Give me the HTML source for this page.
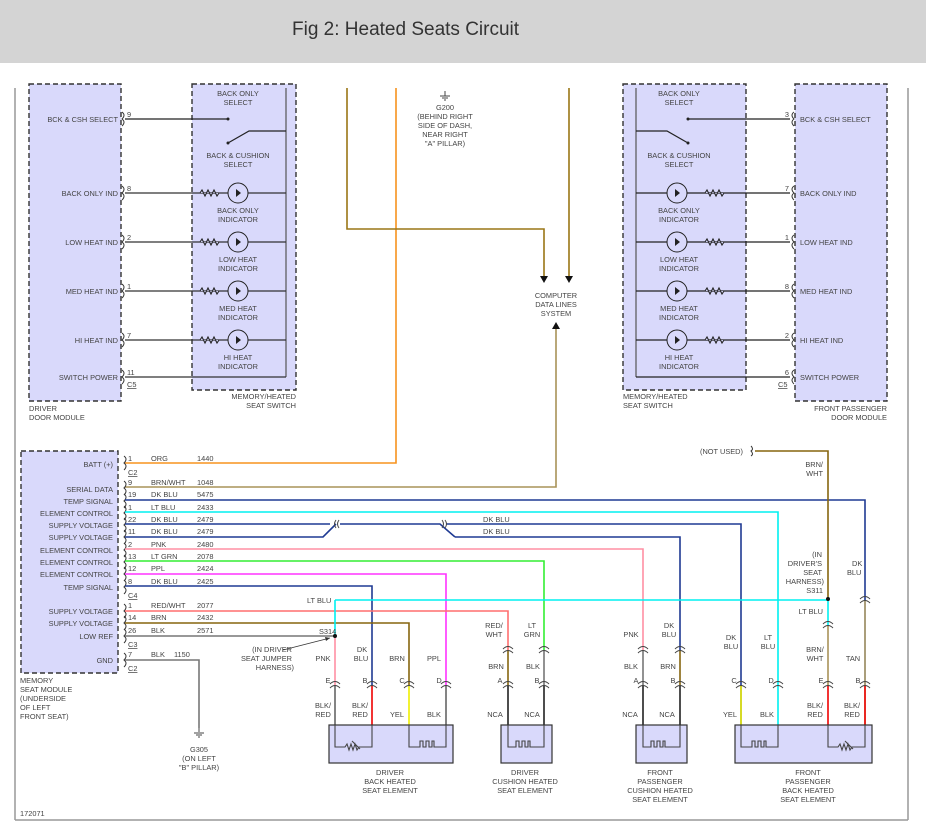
<!DOCTYPE html>
<html><head><meta charset="utf-8"><style>
html,body{margin:0;padding:0;background:#fff;width:926px;height:835px;overflow:hidden}
svg{display:block}
text{font-family:"Liberation Sans",sans-serif;font-size:7.4px;fill:#444}
.m{text-anchor:middle}.e{text-anchor:end}
.w{fill:none;stroke-width:1.6}
.bx{fill:#d9d9fb;stroke:#333;stroke-width:1.4;stroke-dasharray:5,3}
.el{fill:#d9d9fb;stroke:#333;stroke-width:1.2}
.k{stroke:#222;stroke-width:1.2;fill:none}
</style></head><body>
<svg width="926" height="835" viewBox="0 0 926 835" xmlns="http://www.w3.org/2000/svg">
<rect x="0" y="0" width="926" height="63" fill="#d4d4d4"/>
<text x="292" y="35" style="font-size:19px;fill:#333">Fig 2: Heated Seats Circuit</text>
<line x1="15" y1="88" x2="15" y2="820" stroke="#999" stroke-width="1.5"/>
<line x1="908" y1="88" x2="908" y2="820" stroke="#999" stroke-width="1.5"/>
<line x1="15" y1="820" x2="908" y2="820" stroke="#999" stroke-width="1.5"/>

<!-- boxes -->
<rect class="bx" x="29" y="84" width="92" height="317"/>
<rect class="bx" x="192" y="84" width="104" height="306"/>
<rect class="bx" x="623" y="84" width="123" height="306"/>
<rect class="bx" x="795" y="84" width="92" height="317"/>
<line x1="286" y1="88" x2="286" y2="377" stroke="#555" stroke-width="1.2"/>
<line x1="636" y1="88" x2="636" y2="377" stroke="#555" stroke-width="1.2"/>
<g class="e">
<text x="118" y="122">BCK &amp; CSH SELECT</text><text x="118" y="196">BACK ONLY IND</text><text x="118" y="245">LOW HEAT IND</text><text x="118" y="294">MED HEAT IND</text><text x="118" y="343">HI HEAT IND</text><text x="118" y="380">SWITCH POWER</text>
</g>
<text x="127" y="117">9</text><text x="127" y="191">8</text><text x="127" y="240">2</text><text x="127" y="289">1</text><text x="127" y="338">7</text><text x="127" y="375">11</text><text x="127" y="387" text-decoration="underline">C5</text>
<g class="k">
<path d="M125 119H228"/><path d="M228 143L249 131H286"/>
<path d="M125 193H286M125 242H286M125 291H286M125 340H286M125 377H286" stroke="#333"/>
<path d="M688 119H790"/><path d="M636 131H667L688 143"/><path d="M636 193H790M636 242H790M636 291H790M636 340H790M636 377H790"/>
</g>
<circle cx="228" cy="119" r="1.5" fill="#222"/><circle cx="228" cy="143" r="1.5" fill="#222"/><circle cx="688" cy="119" r="1.5" fill="#222"/><circle cx="688" cy="143" r="1.5" fill="#222"/>
<g stroke="#222" stroke-width="1" fill="#d9d9fb">
<circle cx="238" cy="193" r="10"/><circle cx="238" cy="242" r="10"/><circle cx="238" cy="291" r="10"/><circle cx="238" cy="340" r="10"/>
<circle cx="677" cy="193" r="10"/><circle cx="677" cy="242" r="10"/><circle cx="677" cy="291" r="10"/><circle cx="677" cy="340" r="10"/>
</g>
<g fill="#222">
<path d="M236 189v8l5-4z"/><path d="M236 238v8l5-4z"/><path d="M236 287v8l5-4z"/><path d="M236 336v8l5-4z"/>
<path d="M675 189v8l5-4z"/><path d="M675 238v8l5-4z"/><path d="M675 287v8l5-4z"/><path d="M675 336v8l5-4z"/>
</g>
<g fill="#d9d9fb" stroke="#222" stroke-width="1.1">
<path d="M200 193l2-3 3 6 3-6 3 6 3-6 3 6 2-3"/><path d="M200 242l2-3 3 6 3-6 3 6 3-6 3 6 2-3"/><path d="M200 291l2-3 3 6 3-6 3 6 3-6 3 6 2-3"/><path d="M200 340l2-3 3 6 3-6 3 6 3-6 3 6 2-3"/>
<path d="M705 193l2-3 3 6 3-6 3 6 3-6 3 6 2-3"/><path d="M705 242l2-3 3 6 3-6 3 6 3-6 3 6 2-3"/><path d="M705 291l2-3 3 6 3-6 3 6 3-6 3 6 2-3"/><path d="M705 340l2-3 3 6 3-6 3 6 3-6 3 6 2-3"/>
</g>
<g class="m">
<text x="238" y="96">BACK ONLY</text><text x="238" y="105">SELECT</text>
<text x="238" y="158">BACK &amp; CUSHION</text><text x="238" y="167">SELECT</text>
<text x="238" y="213">BACK ONLY</text><text x="238" y="222">INDICATOR</text>
<text x="238" y="262">LOW HEAT</text><text x="238" y="271">INDICATOR</text>
<text x="238" y="311">MED HEAT</text><text x="238" y="320">INDICATOR</text>
<text x="238" y="360">HI HEAT</text><text x="238" y="369">INDICATOR</text>
<text x="679" y="96">BACK ONLY</text><text x="679" y="105">SELECT</text>
<text x="679" y="158">BACK &amp; CUSHION</text><text x="679" y="167">SELECT</text>
<text x="679" y="213">BACK ONLY</text><text x="679" y="222">INDICATOR</text>
<text x="679" y="262">LOW HEAT</text><text x="679" y="271">INDICATOR</text>
<text x="679" y="311">MED HEAT</text><text x="679" y="320">INDICATOR</text>
<text x="679" y="360">HI HEAT</text><text x="679" y="369">INDICATOR</text>
</g>
<text x="296" y="399" class="e">MEMORY/HEATED</text><text x="296" y="408" class="e">SEAT SWITCH</text>
<text x="29" y="411">DRIVER</text><text x="29" y="420">DOOR MODULE</text>

<text x="800" y="122">BCK &amp; CSH SELECT</text><text x="800" y="196">BACK ONLY IND</text><text x="800" y="245">LOW HEAT IND</text><text x="800" y="294">MED HEAT IND</text><text x="800" y="343">HI HEAT IND</text><text x="800" y="380">SWITCH POWER</text>
<g class="e"><text x="789" y="117">3</text><text x="789" y="191">7</text><text x="789" y="240">1</text><text x="789" y="289">8</text><text x="789" y="338">2</text><text x="789" y="375">6</text></g>
<text x="778" y="387" text-decoration="underline">C5</text>
<text x="623" y="399">MEMORY/HEATED</text><text x="623" y="408">SEAT SWITCH</text>
<text x="887" y="411" class="e">FRONT PASSENGER</text><text x="887" y="420" class="e">DOOR MODULE</text>
<g fill="none" stroke="#333" stroke-width="1">
<path d="M122 112q4 3 0 7q4 3 0 7M122 186q4 3 0 7q4 3 0 7M122 235q4 3 0 7q4 3 0 7M122 284q4 3 0 7q4 3 0 7M122 333q4 3 0 7q4 3 0 7M122 370q4 3 0 7q4 3 0 7"/>
<path d="M794 112q-4 3 0 7q-4 3 0 7M794 186q-4 3 0 7q-4 3 0 7M794 235q-4 3 0 7q-4 3 0 7M794 284q-4 3 0 7q-4 3 0 7M794 333q-4 3 0 7q-4 3 0 7M794 370q-4 3 0 7q-4 3 0 7"/>
</g>

<!-- G200 -->
<path d="M445 91v5M440 96h10M442 98h6M444 100h2" stroke="#444" stroke-width="1"/>
<g class="m"><text x="445" y="110">G200</text><text x="445" y="119">(BEHIND RIGHT</text><text x="445" y="128">SIDE OF DASH,</text><text x="445" y="137">NEAR RIGHT</text><text x="445" y="146">"A" PILLAR)</text>
<text x="556" y="298">COMPUTER</text><text x="556" y="307">DATA LINES</text><text x="556" y="316">SYSTEM</text></g>
<g class="w">
<path d="M396 88V463H125" stroke="#f7931e"/>
<path d="M347 88V229H544V276" stroke="#9a7616"/>
<path d="M569 88V276" stroke="#9a7616"/>
<path d="M125 487H556V327" stroke="#a89358"/>
</g>
<path d="M540 276h8l-4 7z M565 276h8l-4 7z M552 329h8l-4-7z" fill="#111"/>

<!-- memory seat module -->
<rect class="bx" x="21" y="451" width="97" height="222"/>
<g class="e">
<text x="113" y="467">BATT (+)</text><text x="113" y="492">SERIAL DATA</text><text x="113" y="504">TEMP SIGNAL</text><text x="113" y="516">ELEMENT CONTROL</text><text x="113" y="528">SUPPLY VOLTAGE</text><text x="113" y="540">SUPPLY VOLTAGE</text><text x="113" y="553">ELEMENT CONTROL</text><text x="113" y="565">ELEMENT CONTROL</text><text x="113" y="577">ELEMENT CONTROL</text><text x="113" y="590">TEMP SIGNAL</text><text x="113" y="614">SUPPLY VOLTAGE</text><text x="113" y="626">SUPPLY VOLTAGE</text><text x="113" y="639">LOW REF</text><text x="113" y="663">GND</text>
</g>
<g fill="none" stroke="#333" stroke-width="1">
<path d="M124 456q4 3 0 7q4 3 0 7M124 481q4 3 0 7q4 3 0 7M124 494q4 3 0 7q4 3 0 7M124 506q4 3 0 7q4 3 0 7M124 518q4 3 0 7q4 3 0 7M124 530q4 3 0 7q4 3 0 7M124 543q4 3 0 7q4 3 0 7M124 555q4 3 0 7q4 3 0 7M124 567q4 3 0 7q4 3 0 7M124 580q4 3 0 7q4 3 0 7M124 604q4 3 0 7q4 3 0 7M124 616q4 3 0 7q4 3 0 7M124 629q4 3 0 7q4 3 0 7M124 653q4 3 0 7q4 3 0 7"/>
</g>
<text x="128" y="461">1</text><text x="151" y="461">ORG</text><text x="197" y="461">1440</text>
<text x="128" y="475" text-decoration="underline">C2</text>
<text x="128" y="485">9</text><text x="151" y="485">BRN/WHT</text><text x="197" y="485">1048</text>
<text x="128" y="497">19</text><text x="151" y="497">DK BLU</text><text x="197" y="497">5475</text>
<text x="128" y="510">1</text><text x="151" y="510">LT BLU</text><text x="197" y="510">2433</text>
<text x="128" y="522">22</text><text x="151" y="522">DK BLU</text><text x="197" y="522">2479</text>
<text x="128" y="534">11</text><text x="151" y="534">DK BLU</text><text x="197" y="534">2479</text>
<text x="128" y="547">2</text><text x="151" y="547">PNK</text><text x="197" y="547">2480</text>
<text x="128" y="559">13</text><text x="151" y="559">LT GRN</text><text x="197" y="559">2078</text>
<text x="128" y="571">12</text><text x="151" y="571">PPL</text><text x="197" y="571">2424</text>
<text x="128" y="584">8</text><text x="151" y="584">DK BLU</text><text x="197" y="584">2425</text>
<text x="128" y="598" text-decoration="underline">C4</text>
<text x="128" y="608">1</text><text x="151" y="608">RED/WHT</text><text x="197" y="608">2077</text>
<text x="128" y="620">14</text><text x="151" y="620">BRN</text><text x="197" y="620">2432</text>
<text x="128" y="633">26</text><text x="151" y="633">BLK</text><text x="197" y="633">2571</text>
<text x="128" y="647" text-decoration="underline">C3</text>
<text x="128" y="657">7</text><text x="151" y="657">BLK</text><text x="174" y="657">1150</text>
<text x="128" y="671" text-decoration="underline">C2</text>
<text x="20" y="683">MEMORY</text><text x="20" y="692">SEAT MODULE</text><text x="20" y="701">(UNDERSIDE</text><text x="20" y="710">OF LEFT</text><text x="20" y="719">FRONT SEAT)</text>
<text x="20" y="816">172071</text>

<!-- wires -->
<g class="w">
<path d="M125 500H865V685" stroke="#1f3a93"/>
<path d="M865 600V725" stroke="#b8a46a"/>
<path d="M125 512H778V725" stroke="#00f0f0"/>
<path d="M125 524H330M340 524H440L455 537" stroke="#1f3a93"/>
<path d="M125 537H323L336 524" stroke="#1f3a93"/>
<path d="M446 524H741V725" stroke="#1f3a93"/>
<path d="M455 537H680V650" stroke="#1f3a93"/>
<path d="M125 549H643V650" stroke="#ff8fa3"/>
<path d="M125 561H544V650" stroke="#33ee33"/>
<path d="M125 574H446V685" stroke="#ff33ff"/>
<path d="M125 586H372V685" stroke="#1f3a93"/>
<path d="M125 611H508V650" stroke="#ff6f6f"/>
<path d="M125 623H409V685" stroke="#86650f"/>
<path d="M125 636H335" stroke="#777"/>
<path d="M335 600H828M335 600V636" stroke="#00f0f0"/>
<path d="M335 636V685" stroke="#ff8fa3"/>
<path d="M125 660H199V728" stroke="#777"/>
<path d="M755 451H828V599" stroke="#86650f"/>
<path d="M828 599V625" stroke="#00f0f0"/>
<path d="M828 625V685" stroke="#a89358"/>
<path d="M508 650V685" stroke="#86650f"/><path d="M544 650V685" stroke="#777"/>
<path d="M643 650V685" stroke="#777"/><path d="M680 650V685" stroke="#86650f"/>
<path d="M335 685V750" stroke="#666"/><path d="M372 685V725" stroke="#e00"/><path d="M409 685V725" stroke="#ee0"/><path d="M446 685V750" stroke="#666"/>
<path d="M508 685V750M544 685V750M643 685V750M680 685V750" stroke="#222"/>
<path d="M741 685V725" stroke="#ee0"/><path d="M778 725V750" stroke="#666"/><path d="M828 685V725" stroke="#e00"/><path d="M865 685V725" stroke="#e00"/>
</g>
<circle cx="335" cy="636" r="2" fill="#111"/><circle cx="828" cy="599" r="2" fill="#111"/>
<path d="M283 650L330 638" stroke="#333" stroke-width="0.8"/><path d="M330 638l-5-1 1 4z" fill="#333"/>
<text x="319" y="634">S314</text>
<text x="307" y="603">LT BLU</text><text x="483" y="522">DK BLU</text><text x="483" y="534">DK BLU</text>
<text x="700" y="454">(NOT USED)</text>
<path d="M751 446q3 3 0 5q3 3 0 5" fill="none" stroke="#333"/>
<g class="e"><text x="292" y="652">(IN DRIVER</text><text x="292" y="661">SEAT JUMPER</text><text x="294" y="670">HARNESS)</text>
<text x="823" y="467">BRN/</text><text x="823" y="476">WHT</text>
<text x="822" y="557">(IN</text><text x="822" y="566">DRIVER'S</text><text x="822" y="575">SEAT</text><text x="824" y="584">HARNESS)</text><text x="823" y="593">S311</text>
<text x="823" y="614">LT BLU</text></g>
<text x="852" y="566">DK</text><text x="847" y="575">BLU</text>
<g class="m">
<text x="323" y="661">PNK</text><text x="362" y="652">DK</text><text x="361" y="661">BLU</text><text x="397" y="661">BRN</text><text x="434" y="661">PPL</text>
<text x="328" y="683">E</text><text x="365" y="683">B</text><text x="402" y="683">C</text><text x="439" y="683">D</text>
<text x="323" y="708">BLK/</text><text x="323" y="717">RED</text><text x="360" y="708">BLK/</text><text x="360" y="717">RED</text><text x="397" y="717">YEL</text><text x="434" y="717">BLK</text>
<text x="494" y="628">RED/</text><text x="494" y="637">WHT</text><text x="532" y="628">LT</text><text x="532" y="637">GRN</text>
<text x="496" y="669">BRN</text><text x="533" y="669">BLK</text><text x="500" y="683">A</text><text x="537" y="683">B</text>
<text x="495" y="717">NCA</text><text x="532" y="717">NCA</text>
<text x="631" y="637">PNK</text><text x="669" y="628">DK</text><text x="669" y="637">BLU</text>
<text x="631" y="669">BLK</text><text x="668" y="669">BRN</text><text x="636" y="683">A</text><text x="673" y="683">B</text>
<text x="630" y="717">NCA</text><text x="667" y="717">NCA</text>
<text x="731" y="640">DK</text><text x="731" y="649">BLU</text><text x="768" y="640">LT</text><text x="768" y="649">BLU</text>
<text x="815" y="652">BRN/</text><text x="815" y="661">WHT</text><text x="853" y="661">TAN</text>
<text x="734" y="683">C</text><text x="771" y="683">D</text><text x="821" y="683">E</text><text x="858" y="683">B</text>
<text x="730" y="717">YEL</text><text x="767" y="717">BLK</text><text x="815" y="708">BLK/</text><text x="815" y="717">RED</text><text x="852" y="708">BLK/</text><text x="852" y="717">RED</text>
</g>
<g fill="none" stroke="#444" stroke-width="1">
<path d="M330 684q5-5 10 0M330 688q5-5 10 0M367 684q5-5 10 0M367 688q5-5 10 0M404 684q5-5 10 0M404 688q5-5 10 0M441 684q5-5 10 0M441 688q5-5 10 0"/>
<path d="M503 649q5-5 10 0M503 653q5-5 10 0M539 649q5-5 10 0M539 653q5-5 10 0M638 649q5-5 10 0M638 653q5-5 10 0M675 649q5-5 10 0M675 653q5-5 10 0"/>
<path d="M503 684q5-5 10 0M503 688q5-5 10 0M539 684q5-5 10 0M539 688q5-5 10 0M638 684q5-5 10 0M638 688q5-5 10 0M675 684q5-5 10 0M675 688q5-5 10 0"/>
<path d="M736 684q5-5 10 0M736 688q5-5 10 0M773 684q5-5 10 0M773 688q5-5 10 0M823 684q5-5 10 0M823 688q5-5 10 0M860 684q5-5 10 0M860 688q5-5 10 0"/>
<path d="M823 624q5-5 10 0M823 628q5-5 10 0M860 599q5-5 10 0M860 603q5-5 10 0"/>
<path d="M339 520q-3 4 0 8M336 520q-3 4 0 8M442 520q3 4 0 8M445 520q3 4 0 8"/>
</g>
<path d="M199 728v4M194 733h10M196 735h6M198 737h2" stroke="#444" stroke-width="1"/>
<g class="m"><text x="199" y="752">G305</text><text x="199" y="761">(ON LEFT</text><text x="199" y="770">"B" PILLAR)</text></g>
<rect class="el" x="329" y="725" width="124" height="38"/>
<rect class="el" x="501" y="725" width="51" height="38"/>
<rect class="el" x="636" y="725" width="51" height="38"/>
<rect class="el" x="735" y="725" width="137" height="38"/>
<g fill="none" stroke="#444" stroke-width="1.1">
<path d="M335 725V747H345l2-3 2 6 2-6 2 6 2-6 2 6 2-3H372V725M352 741l8 8"/>
<path d="M409 725V747H420V741h3v6h3v-6h3v6h3v-6h2v6H446V725"/>
<path d="M508 725V747H516V741h3v6h3v-6h3v6h3v-6h2v6H544V725"/>
<path d="M643 725V747H651V741h3v6h3v-6h3v6h3v-6h2v6H680V725"/>
<path d="M741 725V747H752V741h3v6h3v-6h3v6h3v-6h2v6H778V725"/>
<path d="M828 725V747H838l2-3 2 6 2-6 2 6 2-6 2 6 2-3H865V725M845 741l8 8"/>
</g>
<g class="m">
<text x="390" y="775">DRIVER</text><text x="390" y="784">BACK HEATED</text><text x="390" y="793">SEAT ELEMENT</text>
<text x="525" y="775">DRIVER</text><text x="525" y="784">CUSHION HEATED</text><text x="525" y="793">SEAT ELEMENT</text>
<text x="660" y="775">FRONT</text><text x="660" y="784">PASSENGER</text><text x="660" y="793">CUSHION HEATED</text><text x="660" y="802">SEAT ELEMENT</text>
<text x="808" y="775">FRONT</text><text x="808" y="784">PASSENGER</text><text x="808" y="793">BACK HEATED</text><text x="808" y="802">SEAT ELEMENT</text>
</g>
</svg>
</body></html>
